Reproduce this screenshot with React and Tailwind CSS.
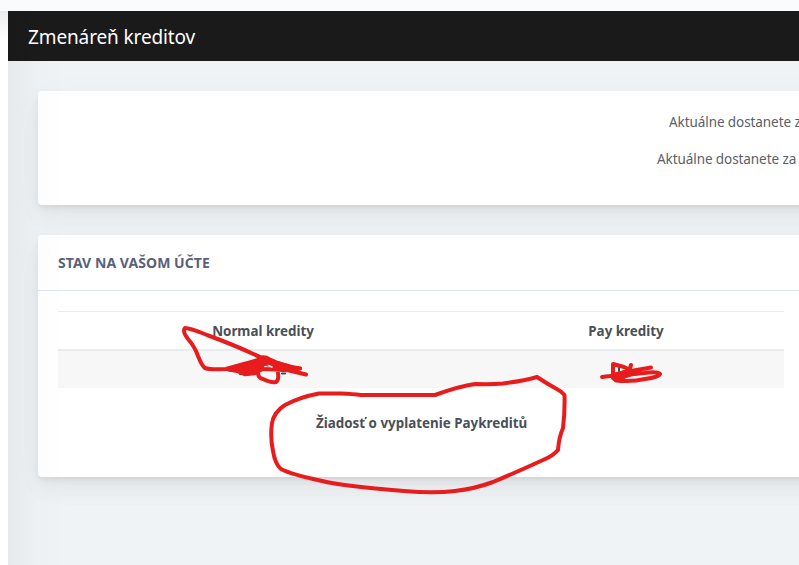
import React from 'react';

const CARD_SHADOW =
  'shadow-[0_7.5px_35px_rgba(4,9,20,0.03),0_15px_22.5px_rgba(4,9,20,0.03),0_4px_8.5px_rgba(4,9,20,0.05),0_2px_3px_rgba(4,9,20,0.03)]';

const Card = ({ className, children }) => (
  <section className={`w-[900px] shrink-0 rounded bg-white ${CARD_SHADOW} ${className}`}>
    {children}
  </section>
);

const RateInfo = () => (
  <Card className="h-[114px] pt-[21px] text-[13.5px] tracking-[-0.08px] text-[#5a6067]">
    <p className="ml-[631px] h-[37px] whitespace-nowrap leading-[20px]">Aktuálne dostanete z</p>
    <p className="ml-[619px] whitespace-nowrap leading-[20px]">Aktuálne dostanete za</p>
  </Card>
);

const BalanceTable = () => (
  <div className="ml-5 mt-5 w-[726px] text-[13.4px] font-bold">
    <div className="flex h-10 border-t border-b-2 border-[#e9ecef] leading-[38px]">
      <div className="w-[410px] text-center">Normal kredity</div>
      <div className="w-[316px] text-center">Pay kredity</div>
    </div>
    <div className="h-[37px] bg-[#f7f7f7]" />
  </div>
);

const Balance = () => (
  <Card className="mt-[30px] h-[242px]">
    <h2 className="h-14 border-b border-[#dee4f0] pl-5 font-bold leading-[56px] tracking-[0.06px] text-[#59617a]">
      STAV NA VAŠOM ÚČTE
    </h2>
    <BalanceTable />
    <div className="ml-[278px] mt-[25px] text-[13.4px] font-bold leading-[21px]">
      Žiadosť o vyplatenie Paykreditů
    </div>
  </Card>
);

// Freehand red marker strokes on top of the page
const Scribbles = () => (
  <svg
    className="pointer-events-none absolute left-0 top-0"
    width="799"
    height="565"
    fill="none"
    stroke="#e81c1c"
    strokeWidth="4"
    strokeLinecap="round"
    strokeLinejoin="round"
  >
    {/* traces of the crossed-out amounts */}
    <path d="M240 374H243M282 373.5H285M619 368V371M628 368L631 370" stroke="#3f4850" strokeWidth="2" />
    <path d="M262 358Q237 346 207 335Q190 328 185 328Q182 331 188 339Q195 347 198 356Q202 366 205 368Q211 370 226 369Q247 363 262 359L271 360Q283 366 300 368.5" />
    <path d="M259 358Q265 356 269 359M277 363L288 366Q292 369 300 368.5M230 370L262 369L287 370L306 374.5M258 373Q258 378 263 379Q271 383 276 382Q279 380 278 373" />
    <path
      d="M228 370L240 366L260 359L269 359L277 363L287 368L286 371L279 370L275 368L270 366L265 366L262 370L255 374L245 375L238 372Z"
      fill="#e81c1c"
      strokeWidth="2.5"
    />
    {/* gap left between the strokes */}
    <path d="M265 366.5L268 365.5L272 367" stroke="#f7f7f7" strokeWidth="1.5" />
    <path d="M265 365.2H268" stroke="#3f4850" strokeWidth="1" />
    <path d="M602 377L610 376L625 372L651 367.5M613 378V364L624 367L632 371M631 365L629 371L614 377M613 378L616 380.5Q632 382 645 379Q659 377 660 374Q657 371 644 373L625 375L616 378M619 374L637 371M621 377L637 373" />
    <path d="M614 374L625 371L640 370L634 373L624 378L615 380Z" fill="#e81c1c" strokeWidth="2" />
    <path d="M537 377Q523 381 503 383.5Q491 384.5 475 384Q460 386 435 395H361Q353 394 341 393.5H319Q300 397 285 405Q274 412 272 423Q270 437 273 451Q275 464 281 469Q290 474 322 481Q342 486 404 491Q434 493.5 455 491Q474 489 493 482Q517 472 543 460Q553 456 558 450Q559 437 563 428Q565 411 564.5 395Q561 391 555 388Q546 383 537 377" />
  </svg>
);

const App = () => (
  <div className="relative h-[565px] w-[799px] overflow-hidden bg-white font-['Noto_Sans','Open_Sans',sans-serif] text-[14px] text-[#495057]">
    <div className="h-[11px] bg-[#fafbfd]" />
    <div className="flex h-[554px]">
      <div className="w-2 shrink-0 bg-linear-to-b from-[#ececec] to-white to-[30px]" />
      <main className="relative w-[791px] overflow-hidden bg-[#f0f3f6]">
        <header className="h-[50px] bg-[#1a1a1a] pl-5 text-[19px] leading-[52px] tracking-[-0.12px] text-white">
          Zmenáreň kreditov
        </header>
        <div className="pl-[30px] pt-[30px]">
          <RateInfo />
          <Balance />
        </div>
        {/* shade cast by the sidebar */}
        <div className="pointer-events-none absolute inset-y-0 left-0 w-[60px] bg-linear-to-r from-black/4 via-black/1 to-transparent" />
      </main>
    </div>
    <Scribbles />
  </div>
);

export default App;
